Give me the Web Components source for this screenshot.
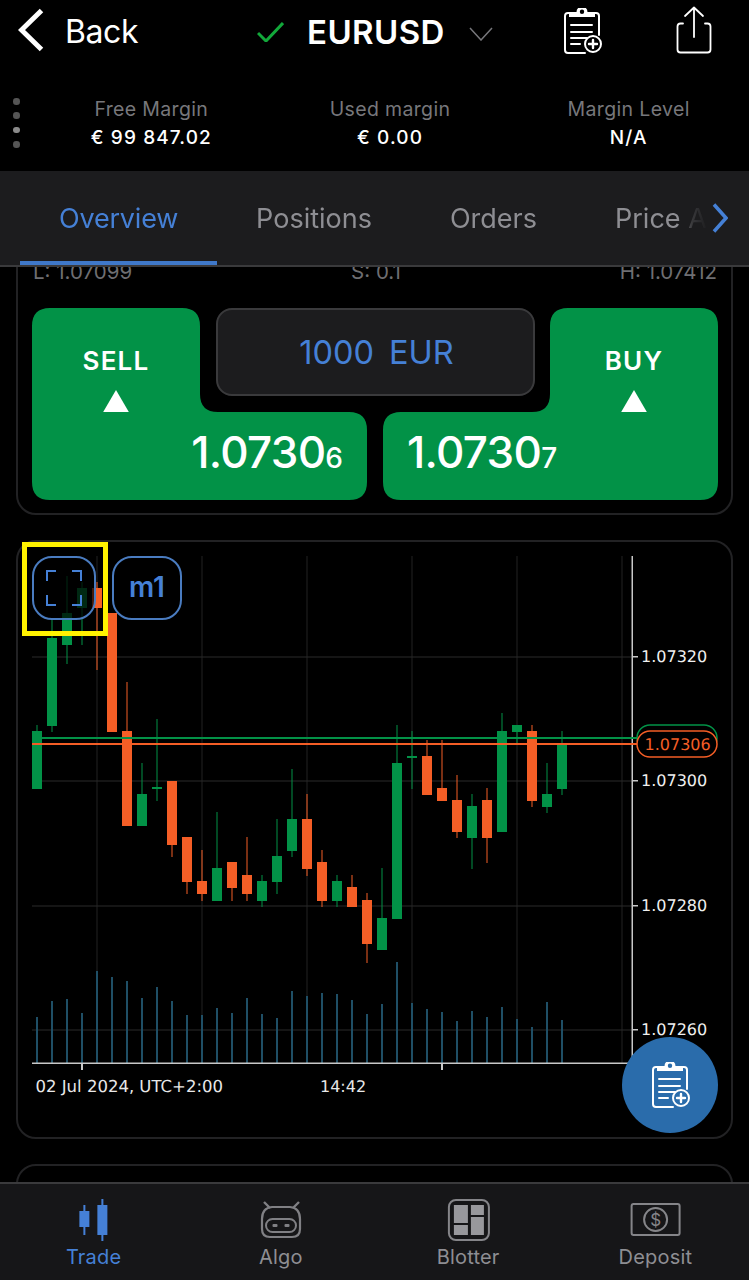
<!DOCTYPE html>
<html>
<head>
<meta charset="utf-8">
<title>EURUSD</title>
<style>
html, body { margin: 0; background: #000; }
body { width: 749px; height: 1280px; overflow: hidden; font-family: Inter, "Liberation Sans", sans-serif; }
</style>
</head>
<body>
<trade-app>
  <top-bar slot="top"></top-bar>
  <margin-strip slot="top"></margin-strip>
  <tab-strip slot="top"></tab-strip>
  <order-card></order-card>
  <chart-card></chart-card>
  <nav-bar slot="nav"></nav-bar>
</trade-app>

<script>
const CLIPBOARD_ICON = `
<g fill="none" stroke="currentColor" stroke-width="2" stroke-linecap="round" stroke-linejoin="round">
  <path d="M21 45H4Q1 45 1 42V8Q1 5 4 5H6M29 5H32Q35 5 35 8V27"/>
  <path fill="currentColor" fill-rule="evenodd" stroke="none" d="M5 4H12.500A5.500 5.500 0 0 1 23.500 4H31V9H5ZM18 1.500A2.200 2.200 0 1 0 18 5.900 2.200 2.200 0 1 0 18 1.500Z"/>
  <path d="M7 17H28M7 24H28M7 30H23M7 36H16"/>
  <circle cx="29" cy="36" r="8"/>
  <path d="M29 32V40M25 36H33" stroke-width="2.400"/>
</g>`

class TopBar extends HTMLElement {
    constructor() {
        super()
        this.attachShadow({ mode: 'open' })
        this.shadowRoot.innerHTML = `
<style>
:host { display: flex; align-items: center; height: 62px; color: #fff; }
.back { width: 26px; height: 44px; margin-left: 18px; margin-top: -2px; flex: none; }
.label { margin-left: 21px; width: 192px; font-size: 32px; margin-top: 1px; letter-spacing: -0.4px; flex: none; }
.check { width: 27px; height: 20px; margin-top: 2px; flex: none; }
.pair { margin-left: 23px; font-size: 33px; font-weight: 600; width: 136px; margin-top: 1px; letter-spacing: .4px; white-space: nowrap; flex: none; }
.caret { width: 24px; height: 14px; margin-left: 26px; margin-top: 5px; flex: none; }
.clip { width: 38px; height: 46px; margin-left: 71px; flex: none; }
.share { width: 36px; height: 48px; margin-left: 74px; margin-top: -2px; flex: none; }
</style>
<svg class="back" viewBox="0 0 26 44"><path d="M23.500 2.500 3.500 22 23.500 41.500" fill="none" stroke="#fff" stroke-width="5"/></svg>
<span class="label">Back</span>
<svg class="check" viewBox="0 0 27 20"><path d="M1 11 9 19 26 1" fill="none" stroke="#12a83a" stroke-width="3"/></svg>
<span class="pair">EURUSD</span>
<svg class="caret" viewBox="0 0 24 14"><path d="M1 1 12 13 23 1" fill="none" stroke="#77777b" stroke-width="1.500"/></svg>
<svg class="clip" viewBox="0 0 38 46">${CLIPBOARD_ICON}</svg>
<svg class="share" viewBox="0 0 36 48"><g fill="none" stroke="#fff" stroke-width="1.800" stroke-linecap="round" stroke-linejoin="round"><path d="M18 1.500V31M9 10 18 1.500 27 10"/><path d="M7 17.500H4.500Q1.500 17.500 1.500 20.500V43.500Q1.500 46.500 4.500 46.500H31.500Q34.500 46.500 34.500 43.500V20.500Q34.500 17.500 31.500 17.500H29"/></g></svg>
`
    }
}

class MarginStat extends HTMLElement {
    constructor() {
        super()
        this.attachShadow({ mode: 'open' })
        this.shadowRoot.innerHTML = `
<style>
:host { display: flex; flex-direction: column; align-items: center; gap: 5px; flex: 1; white-space: nowrap; }
.k { font-size: 19.500px; line-height: 23px; color: #77777b; letter-spacing: .35px; }
.v { font-size: 19px; line-height: 23px; color: #fff; font-weight: 500; letter-spacing: 1.100px; }
</style>
<span class="k"><slot name="k"></slot></span>
<span class="v"><slot name="v"></slot></span>
`
    }
}

class MarginStrip extends HTMLElement {
    constructor() {
        super()
        this.attachShadow({ mode: 'open' })
        this.shadowRoot.innerHTML = `
<style>
:host { display: flex; align-items: flex-start; height: 109px; box-sizing: border-box; padding-top: 36px; position: relative; }
.dots { position: absolute; left: 13px; top: 36px; display: flex; flex-direction: column; gap: 7.900px; }
.dots i { display: block; width: 6.500px; height: 6.500px; border-radius: 50%; background: #555; }
.dots i:nth-child(3) { background: #8a8a8a; }
.stats { display: flex; width: 100%; padding: 0 1px 0 32px; box-sizing: border-box; }
</style>
<div class="dots"><i></i><i></i><i></i><i></i></div>
<div class="stats">
  <margin-stat><span slot="k">Free Margin</span><span slot="v">€ 99 847.02</span></margin-stat>
  <margin-stat><span slot="k">Used margin</span><span slot="v">€ 0.00</span></margin-stat>
  <margin-stat><span slot="k">Margin Level</span><span slot="v">N/A</span></margin-stat>
</div>
`
    }
}

class TabStrip extends HTMLElement {
    constructor() {
        super()
        this.attachShadow({ mode: 'open' })
        this.shadowRoot.innerHTML = `
<style>
:host { display: block; height: 96px; box-sizing: border-box; background: #1c1c1e; border-bottom: 2px solid #3a3a3c; position: relative; }
.tabs { display: flex; height: 94px; padding-left: 20px; overflow: hidden; width: 708px; box-sizing: border-box;
    -webkit-mask-image: linear-gradient(to right, #000 678px, rgba(0,0,0,.25) 692px, transparent 708px); mask-image: linear-gradient(to right, #000 678px, rgba(0,0,0,.25) 692px, transparent 708px); }
.tab { padding: 0 39px; font-size: 27px; line-height: 96px; height: 94px; color: #8e8e93; box-sizing: border-box; white-space: nowrap; flex: none; }
.tab:last-child { padding-right: 0; }
.tab.on { color: #4580d6; border-bottom: 4px solid #3f78c9; letter-spacing: -.2px; }
.more { position: absolute; right: 21px; top: 32px; width: 16px; height: 30px; }
</style>
<div class="tabs">
  <div class="tab on">Overview</div>
  <div class="tab">Positions</div>
  <div class="tab">Orders</div>
  <div class="tab">Price A</div>
</div>
<svg class="more" viewBox="0 0 16 30"><path d="M2 1.500 14 15 2 28.500" fill="none" stroke="#4580d6" stroke-width="3.500"/></svg>
`
    }
}

class TradeButton extends HTMLElement {
    static get observedAttributes() {
        return ['side']
    }
    constructor() {
        super()
        this.attachShadow({ mode: 'open' })
        const buy = this.getAttribute('side') === 'buy'
        // L-shaped green backing, mirrored for the buy side
        const shape = 'M0 18Q0 0 18 0H150Q168 0 168 18V86Q168 104 186 104H317Q335 104 335 122V174Q335 192 317 192H18Q0 192 0 174Z'
        this.shadowRoot.innerHTML = `
<style>
:host { display: flex; flex-direction: column; flex: none; width: 335px; height: 192px; position: relative; color: #fff; }
svg.bg { position: absolute; inset: 0; width: 335px; height: 192px; }
.side { position: relative; width: 168px; ${buy ? 'margin-left: 167px;' : ''} display: flex; flex-direction: column; align-items: center; padding-top: 37px; box-sizing: border-box; height: 104px; }
.name { font-size: 26px; font-weight: 600; line-height: 32px; letter-spacing: 1.200px; }
.tri { width: 28px; height: 24px; margin-top: 13px; }
.price { position: relative; display: flex; align-items: baseline; ${buy ? 'padding-left: 24px;' : 'justify-content: flex-end; padding-right: 24px;'} font-size: 44px; font-weight: 500; line-height: 56px; margin-top: 12px; letter-spacing: -.7px; }
.price small { font-size: 28px; letter-spacing: 0; font-weight: 500; }
</style>
<svg class="bg" viewBox="0 0 335 192"><path fill="#029247" d="${shape}" ${buy ? 'transform="matrix(-1 0 0 1 335 0)"' : ''}/></svg>
<div class="side">
  <span class="name"><slot name="name"></slot></span>
  <svg class="tri" viewBox="0 0 28 24"><path d="M14 0 28 24H0Z" fill="#fff"/></svg>
</div>
<div class="price"><slot name="price"></slot><small><slot name="pip"></slot></small></div>
`
    }
}

class OrderCard extends HTMLElement {
    constructor() {
        super()
        this.attachShadow({ mode: 'open' })
        this.shadowRoot.innerHTML = `
<style>
:host { display: block; margin: -63px 16px 0 16px; border: 2px solid #222224; border-radius: 20px; padding: 54px 14px 13px 14px; }
.stats { display: flex; justify-content: space-between; font-size: 20.500px; line-height: 24px; color: #6e6e72; padding: 0 0 0 1px; height: 24px; margin-bottom: 24px; }
.deal { display: flex; gap: 16px; position: relative; }
.amount { position: absolute; left: 184px; top: 0; width: 319px; height: 88px; box-sizing: border-box; background: #1c1c1e; border: 2px solid #3a3a3c; border-radius: 16px;
    display: flex; align-items: center; justify-content: center; gap: 15px; color: #4580d6; font-size: 32.500px; padding-left: 2px; }
</style>
<div class="stats"><span>L: 1.07099</span><span>S: 0.1</span><span>H: 1.07412</span></div>
<div class="deal">
  <trade-button side="sell"><span slot="name">SELL</span><span slot="price">1.0730</span><span slot="pip">6</span></trade-button>
  <trade-button side="buy"><span slot="name">BUY</span><span slot="price">1.0730</span><span slot="pip">7</span></trade-button>
  <div class="amount"><span>1000</span><span>EUR</span></div>
</div>
`
    }
}

// [body top, body bottom, wick top, wick bottom, up?] in chart pixels, 15px apart
const CANDLES = [
    [731, 789, 725, 789, 1], [638, 726, 620, 732, 1], [613, 645, 576, 664, 1], [588, 608, 582, 645, 1],
    [588, 608, 582, 670, 0], [613, 732, 613, 732, 0], [731, 826, 682, 826, 0], [794, 826, 763, 826, 1],
    [787, 789, 719, 801, 1], [781, 845, 781, 857, 0], [837, 882, 837, 894, 0], [881, 894, 850, 901, 0],
    [868, 901, 812, 901, 1], [862, 888, 862, 901, 0], [875, 894, 837, 901, 0], [881, 901, 875, 907, 1],
    [856, 882, 819, 894, 1], [819, 851, 769, 857, 1], [819, 869, 794, 876, 0], [862, 901, 850, 907, 0],
    [881, 901, 875, 907, 1], [887, 907, 875, 907, 0], [900, 944, 893, 963, 0], [918, 950, 868, 950, 1],
    [763, 919, 725, 919, 1], [756, 758, 731, 789, 1], [756, 795, 740, 795, 0], [788, 801, 740, 801, 0],
    [800, 832, 775, 838, 0], [806, 838, 794, 869, 1], [800, 838, 788, 863, 0], [731, 832, 713, 832, 1],
    [725, 732, 725, 744, 1], [731, 801, 725, 807, 0], [794, 807, 763, 813, 1], [745, 789, 731, 795, 1],
]
const VOLUME_TOPS = [1017, 1001, 999, 1013, 971, 977, 981, 998, 987, 1001, 1015, 1015, 1008, 1013, 998, 1014, 1018, 991, 996,
    993, 994, 1000, 1014, 1004, 962, 1003, 1009, 1012, 1021, 1011, 1017, 1007, 1019, 1027, 1002, 1020]
const GREEN = '#029247'
const ORANGE = '#f45e26'
// the card's svg starts at this page offset
const OX = 18
const OY = 542

function chartSvg() {
    let s = ''
    for (const x of [97, 202, 307, 412, 517, 622]) {
        s += `<rect x="${x - OX - .5}" y="${556 - OY}" width="1" height="${1063 - 556}" fill="#232323"/>`
    }
    for (const y of [657, 781, 906, 1030]) {
        s += `<rect x="${32 - OX}" y="${y - OY - .5}" width="600" height="1" fill="#2a2a2a"/>`
    }
    VOLUME_TOPS.forEach((top, i) => {
        s += `<rect x="${36 + i * 15 - OX}" y="${top - OY}" width="2" height="${1063 - top}" fill="#1f4f66"/>`
    })
    CANDLES.forEach(([bt, bb, wt, wb, up], i) => {
        const cx = 37 + i * 15 - OX
        const c = up ? GREEN : ORANGE
        s += `<rect x="${cx - .5}" y="${wt - OY}" width="1" height="${wb - wt}" fill="${c}"/>`
        s += `<rect x="${cx - 5}" y="${bt - OY}" width="10" height="${bb - bt}" fill="${c}"/>`
    })
    s += `<rect x="${632 - OX - .5}" y="${556 - OY}" width="1.500" height="${1063 - 556}" fill="#c8c8c8"/>`
    s += `<rect x="${32 - OX}" y="${1063 - OY - .5}" width="600" height="1.500" fill="#c8c8c8"/>`
    for (const x of [82, 442]) {
        s += `<rect x="${x - OX - 1}" y="${1063 - OY}" width="2" height="7" fill="#c8c8c8"/>`
    }
    const labels = { 657: '1.07320', 781: '1.07300', 906: '1.07280', 1030: '1.07260' }
    for (const y in labels) {
        s += `<rect x="${632 - OX}" y="${y - OY - 1}" width="6" height="1.500" fill="#c8c8c8"/>`
        s += `<text x="${641 - OX}" y="${+y - OY + 5}" fill="#f0f0f0">${labels[y]}</text>`
    }
    s += `<text x="${35.500 - OX}" y="${1092 - OY}" fill="#e8e8e8" font-size="16.500">02 Jul 2024, UTC+2:00</text>`
    s += `<text x="${320 - OX}" y="${1092 - OY}" fill="#e8e8e8">14:42</text>`
    // current bid / ask
    s += `<rect x="${32 - OX}" y="${737 - OY}" width="605" height="2" fill="${GREEN}"/>`
    s += `<rect x="${637 - OX}" y="${725 - OY}" width="80" height="26" rx="13" fill="#000" stroke="${GREEN}" stroke-width="1.500"/>`
    s += `<rect x="${32 - OX}" y="${743 - OY}" width="605" height="2" fill="${ORANGE}"/>`
    s += `<rect x="${637 - OX}" y="${731 - OY}" width="80" height="26" rx="13" fill="#000" stroke="${ORANGE}" stroke-width="1.500"/>`
    s += `<text x="${644.500 - OX}" y="${750 - OY}" fill="${ORANGE}">1.07306</text>`
    return s
}

class ChartCard extends HTMLElement {
    constructor() {
        super()
        this.attachShadow({ mode: 'open' })
        this.shadowRoot.innerHTML = `
<style>
:host { display: block; position: relative; margin: 25px 16px 0 16px; height: 595px; border: 2px solid #222224; border-radius: 20px; }
svg.plot { position: absolute; left: 0; top: 0; width: 712px; height: 595px; font-family: "DejaVu Sans", sans-serif; font-size: 16px; text-rendering: geometricPrecision; }
.tools { position: absolute; left: 14px; top: 14px; display: flex; gap: 16px; }
.tool { height: 64px; box-sizing: border-box; border: 2px solid #4a7cc0; border-radius: 20px; background: rgba(0,0,0,.72); display: flex; align-items: center; justify-content: center; color: #4580d6; }
.expand { width: 64px; }
.expand svg { width: 38px; height: 38px; }
.tf { width: 70px; font-size: 28px; font-weight: 600; background: #000; padding-bottom: 2px; }
.mark { position: absolute; left: 4px; top: 0; width: 86px; height: 94px; box-sizing: border-box; border: 5px solid #fff200; pointer-events: none; }
.fab { position: absolute; right: 13px; bottom: 4px; width: 96px; height: 96px; border-radius: 50%; background: #2a6cab; color: #fff; display: flex; align-items: center; justify-content: center; }
.fab svg { width: 38px; height: 46px; margin-left: 2px; }
</style>
<svg class="plot" viewBox="0 0 712 595">${chartSvg()}</svg>
<div class="tools">
  <div class="tool expand"><svg viewBox="0 0 38 38"><path d="M11 2H2V12M27 2H36V12M11 36H2V26M27 36H36V26" fill="none" stroke="currentColor" stroke-width="2"/></svg></div>
  <div class="tool tf">m1</div>
</div>
<div class="mark"></div>
<div class="fab"><svg viewBox="0 0 38 46">${CLIPBOARD_ICON}</svg></div>
`
    }
}

const NAV_ICONS = {
    trade: `<svg width="60" height="44" viewBox="0 0 60 44" fill="#4580d6"><rect x="19.375" y="6" width="2" height="30"/><rect x="15.375" y="12" width="10" height="16"/><rect x="37.375" y="0" width="2" height="42"/><rect x="33.375" y="6" width="10" height="30"/></svg>`,
    algo: `<svg width="60" height="44" viewBox="0 0 60 44" fill="none" stroke="#808084" stroke-width="2"><path d="M13 3 19 9M48 3 42 9" stroke-width="2.400"/><path d="M21 8H39Q49 9 49 20V30Q49 38 41 38H19Q11 38 11 30V20Q11 9 21 8Z" stroke-width="2.200"/><rect x="15" y="20" width="30" height="13" rx="6.500" stroke-width="2"/><rect x="21.500" y="25" width="5" height="3" rx="1" fill="#808084" stroke="none"/><rect x="33.500" y="25" width="5" height="3" rx="1" fill="#808084" stroke="none"/></svg>`,
    blotter: `<svg width="60" height="44" viewBox="0 0 60 44"><rect x="10.900" y="1" width="40" height="40" rx="7" fill="none" stroke="#858589" stroke-width="2"/><g fill="#98989c"><rect x="15.900" y="6" width="14" height="18"/><rect x="32.900" y="6" width="13" height="10"/><rect x="32.900" y="18" width="13" height="18"/><rect x="15.900" y="26" width="14" height="10"/></g></svg>`,
    deposit: `<svg width="60" height="44" viewBox="0 0 60 44" fill="none" stroke="#858589" stroke-width="2"><rect x="6.600" y="5" width="48" height="31" rx="2"/><circle cx="30.600" cy="20.500" r="11.500"/><text x="30.600" y="26.500" text-anchor="middle" fill="#858589" stroke="none" font-size="17" font-family="Inter, sans-serif">$</text></svg>`,
}

class NavItem extends HTMLElement {
    constructor() {
        super()
        this.attachShadow({ mode: 'open' })
        const on = this.hasAttribute('on')
        this.shadowRoot.innerHTML = `
<style>
:host { display: flex; flex-direction: column; align-items: center; flex: 1; color: ${on ? '#4580d6' : '#8e8e93'}; font-size: 20px; }
svg { display: block; }
span { line-height: 26px; margin-top: 1px; letter-spacing: .2px; }
</style>
${NAV_ICONS[this.getAttribute('icon')]}
<span><slot></slot></span>
`
    }
}

class NavBar extends HTMLElement {
    constructor() {
        super()
        this.attachShadow({ mode: 'open' })
        this.shadowRoot.innerHTML = `
<style>
:host { display: flex; height: 98px; box-sizing: border-box; padding: 15px 0 0 0; background: #161618; border-top: 2px solid #3a3a3c; }
</style>
<nav-item icon="trade" on>Trade</nav-item>
<nav-item icon="algo">Algo</nav-item>
<nav-item icon="blotter">Blotter</nav-item>
<nav-item icon="deposit">Deposit</nav-item>
`
    }
}

class TradeApp extends HTMLElement {
    constructor() {
        super()
        this.attachShadow({ mode: 'open' })
        this.shadowRoot.innerHTML = `
<style>
:host { display: flex; flex-direction: column; height: 1280px; background: #000; }
.body { flex: 1; min-height: 0; overflow: hidden; }
.stub { margin: 25px 16px 0; height: 60px; border: 2px solid #222224; border-radius: 20px; }
</style>
<slot name="top"></slot>
<div class="body"><slot></slot><div class="stub"></div></div>
<slot name="nav"></slot>
`
    }
}

customElements.define('top-bar', TopBar)
customElements.define('margin-stat', MarginStat)
customElements.define('margin-strip', MarginStrip)
customElements.define('tab-strip', TabStrip)
customElements.define('trade-button', TradeButton)
customElements.define('order-card', OrderCard)
customElements.define('chart-card', ChartCard)
customElements.define('nav-item', NavItem)
customElements.define('nav-bar', NavBar)
customElements.define('trade-app', TradeApp)
</script>
</body>
</html>
